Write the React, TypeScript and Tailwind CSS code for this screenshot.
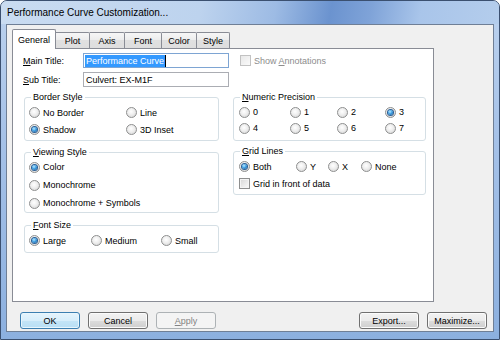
import React from "react";

const FONT = { fontFamily: '"Liberation Sans", Arial, sans-serif' };

function Radio({ checked, label, w }: { checked?: boolean; label: string; w?: string }) {
  return (
    <div className={`flex items-center ${w ?? ""}`}>
      <div className="w-[11px] h-[11px] rounded-full border border-[#8e8f8f] bg-[radial-gradient(circle_at_45%_40%,#ffffff_0%,#eeeeee_45%,#cfcfcf_100%)] flex items-center justify-center shrink-0">
        {checked && (
          <div className="w-[5px] h-[5px] rounded-full bg-[radial-gradient(circle_at_40%_35%,#bdeaff_0%,#3d9fe3_45%,#14508e_100%)] shadow-[0_0_0_1px_#2a5f96]" />
        )}
      </div>
      <span className="ml-[3px] text-[9px] leading-[12px] text-black whitespace-nowrap">{label}</span>
    </div>
  );
}

function Check({ label, disabled, mn }: { label: React.ReactNode; disabled?: boolean; mn?: boolean }) {
  return (
    <div className="flex items-center">
      <div
        className={`w-[11px] h-[11px] border shrink-0 ${
          disabled
            ? "border-[#c2c2c2] bg-[linear-gradient(135deg,#e8e8e8,#fafafa)]"
            : "border-[#8e8f8f] bg-[linear-gradient(135deg,#d6d6d6,#fbfbfb)] shadow-[inset_0_0_0_1px_#f4f4f4]"
        }`}
      />
      <span className={`ml-[3px] text-[9px] leading-[12px] whitespace-nowrap ${disabled ? "text-[#8d8d8d]" : "text-black"}`}>
        {label}
      </span>
    </div>
  );
}

function Group({ title, className, children }: { title: React.ReactNode; className: string; children: React.ReactNode }) {
  return (
    <div className={`relative border border-[#d5dfe5] rounded-[3px] ${className}`}>
      <span className="absolute left-[6px] -top-[7px] px-[2px] bg-white text-[9px] leading-[12px] text-black whitespace-nowrap">
        {title}
      </span>
      {children}
    </div>
  );
}

function Btn({ children, kind }: { children: React.ReactNode; kind?: "default" | "disabled" }) {
  const cls =
    kind === "default"
      ? "border-[#3c7fb1] bg-[linear-gradient(#e5f4fc,#d7eefb_50%,#c4e5f7_50%,#b9dff5)] shadow-[inset_0_0_0_1px_#e8f6fd] text-black"
      : kind === "disabled"
      ? "border-[#adb2b5] bg-[#f4f4f4] text-[#838383]"
      : "border-[#707070] bg-[linear-gradient(#f2f2f2,#ebebeb_50%,#dddddd_50%,#cfcfcf)] shadow-[inset_0_0_0_1px_#fbfbfb] text-black";
  return (
    <div className={`w-[60px] h-[17px] rounded-[3px] border flex items-center justify-center text-[9px] leading-[12px] ${cls}`}>
      {children}
    </div>
  );
}

function Tab({ label, w }: { label: string; w: string }) {
  return (
    <div
      className={`${w} h-[16px] border-t border-r border-[#898c95] rounded-tr-[2px] bg-[linear-gradient(#f6f6f6,#ececec_50%,#e0e0e0_50%,#dedede)] flex items-center justify-center text-[9px] leading-[12px] text-black`}
    >
      {label}
    </div>
  );
}

export default function App() {
  return (
    <div style={FONT} className="w-[500px] h-[340px] overflow-hidden bg-white">
      <div className="w-[500px] h-[340px] flex flex-col rounded-t-[7px] border border-[#3b5070] bg-[linear-gradient(180deg,#bcd2ee_0%,#a6c2e8_40%,#8cb0df_100%)]">
        <div className="h-[23px] flex items-center pl-[6px] rounded-t-[6px] bg-[linear-gradient(100deg,#cadcf1_0%,#bdd3ee_40%,#9dbbe4_55%,#6b93cf_66%,#7fa3d8_74%,#a9c5ea_84%,#b4cdec_100%)]">
          <span className="text-[10px] leading-[12px] text-black">Performance Curve Customization...</span>
        </div>
        <div className="mx-[5px] mb-[7px] flex-1 border border-[#6f7f96] bg-[#f0f0f0] flex flex-col">
          <div className="pl-[5px] pt-[4px] flex flex-col">
            {/* tab strip */}
            <div className="h-[19px] flex items-end relative z-10">
              <div className="w-[44px] h-[20px] -mb-[1px] border-l border-t border-r border-[#898c95] rounded-t-[2px] bg-white flex items-start justify-center pt-[4px] text-[9px] leading-[12px] text-black">
                General
              </div>
              <Tab label="Plot" w="w-[34px]" />
              <Tab label="Axis" w="w-[35px]" />
              <Tab label="Font" w="w-[37px]" />
              <Tab label="Color" w="w-[35px]" />
              <Tab label="Style" w="w-[33px]" />
            </div>
            {/* panel */}
            <div className="w-[422px] h-[254px] border border-[#898c95] bg-white pl-[10px] pt-[4px] flex flex-col">
              <div className="h-[15px] flex items-center">
                <span className="w-[60px] text-[9px] leading-[12px]">
                  <u>M</u>ain Title:
                </span>
                <div className="w-[146px] h-[15px] border border-[#7ea5d3] bg-white flex items-center pl-[1px]">
                  <span className="bg-[#3399ff] text-white text-[9px] leading-[12px] px-[1px]">Performance Curve</span>
                  <span className="w-[1px] h-[12px] bg-black" />
                </div>
                <div className="ml-[11px]">
                  <Check
                    disabled
                    label={
                      <>
                        Show <u>A</u>nnotations
                      </>
                    }
                  />
                </div>
              </div>
              <div className="h-[15px] mt-[4px] flex items-center">
                <span className="w-[60px] text-[9px] leading-[12px]">
                  <u>S</u>ub Title:
                </span>
                <div className="w-[146px] h-[15px] border border-[#abadb3] bg-white flex items-center pl-[1px]">
                  <span className="text-black text-[9px] leading-[12px] px-[1px]">Culvert: EX-M1F</span>
                </div>
              </div>
              <div className="flex mt-[10px] ml-[1px] gap-[14px]">
                {/* left column */}
                <div className="flex flex-col w-[195px]">
                  <Group title="Border Style" className="h-[44px] pl-[4px] pt-[6px]">
                    <div className="h-[17px] flex">
                      <Radio label="No Border" w="w-[97px]" />
                      <Radio label="Line" />
                    </div>
                    <div className="h-[17px] flex">
                      <Radio label="Shadow" checked w="w-[97px]" />
                      <Radio label="3D Inset" />
                    </div>
                  </Group>
                  <Group
                    title={
                      <>
                        <u>V</u>iewing Style
                      </>
                    }
                    className="mt-[11px] h-[61px] pl-[4px] pt-[5px]"
                  >
                    <div className="h-[18px] flex">
                      <Radio label="Color" checked />
                    </div>
                    <div className="h-[18px] flex">
                      <Radio label="Monochrome" />
                    </div>
                    <div className="h-[18px] flex">
                      <Radio label="Monochrome + Symbols" />
                    </div>
                  </Group>
                  <Group
                    title={
                      <>
                        <u>F</u>ont Size
                      </>
                    }
                    className="mt-[12px] h-[28px] pl-[4px] pt-[6px]"
                  >
                    <div className="h-[17px] flex">
                      <Radio label="Large" checked w="w-[62px]" />
                      <Radio label="Medium" w="w-[70px]" />
                      <Radio label="Small" />
                    </div>
                  </Group>
                </div>
                {/* right column */}
                <div className="flex flex-col w-[193px]">
                  <Group
                    title={
                      <>
                        <u>N</u>umeric Precision
                      </>
                    }
                    className="h-[44px] pl-[5px] pt-[6px]"
                  >
                    <div className="h-[16px] flex">
                      <Radio label="0" w="w-[51px]" />
                      <Radio label="1" w="w-[47px]" />
                      <Radio label="2" w="w-[48px]" />
                      <Radio label="3" checked />
                    </div>
                    <div className="h-[16px] flex">
                      <Radio label="4" w="w-[51px]" />
                      <Radio label="5" w="w-[47px]" />
                      <Radio label="6" w="w-[48px]" />
                      <Radio label="7" />
                    </div>
                  </Group>
                  <Group
                    title={
                      <>
                        <u>G</u>rid Lines
                      </>
                    }
                    className="mt-[10px] h-[44px] pl-[5px] pt-[6px]"
                  >
                    <div className="h-[17px] flex">
                      <Radio label="Both" checked w="w-[57px]" />
                      <Radio label="Y" w="w-[32px]" />
                      <Radio label="X" w="w-[33px]" />
                      <Radio label="None" />
                    </div>
                    <div className="h-[17px] flex items-center">
                      <Check label="Grid in front of data" />
                    </div>
                  </Group>
                </div>
              </div>
            </div>
          </div>
          {/* buttons */}
          <div className="mt-[10px] pl-[13px] pr-[6px] flex items-center">
            <div className="flex gap-[8px]">
              <Btn kind="default">OK</Btn>
              <Btn>Cancel</Btn>
              <Btn kind="disabled">
                <span>
                  <u>A</u>pply
                </span>
              </Btn>
            </div>
            <div className="ml-auto flex gap-[8px]">
              <Btn>Export...</Btn>
              <Btn>Maximize...</Btn>
            </div>
          </div>
        </div>
      </div>
    </div>
  );
}
